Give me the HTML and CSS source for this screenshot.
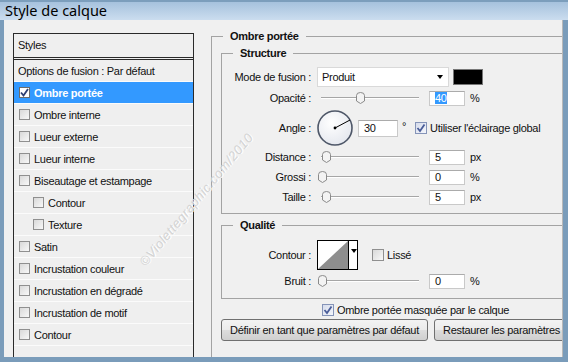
FILE: index.html
```html
<!DOCTYPE html>
<html lang="fr">
<head>
    <meta charset="UTF-8">
    <title>Style de calque</title>
    <link rel="stylesheet" href="styles.css">
</head>
<body>

<div class="window">
    <div class="titlebar">Style de calque</div>

    <div class="main">
        <div class="styles-panel">
            <div class="styles-head">Styles</div>
            <ul class="style-list">
                <li class="item">Options de fusion : Par défaut</li>
                <li class="item selected"><span class="cb on"><svg width="9" height="9" viewBox="0 0 9 9"><path d="M1 4.5 L3.5 7.5 L8 1" fill="none" stroke="#2f3f73" stroke-width="1.8"/></svg></span>Ombre portée</li>
                <li class="item"><span class="cb"></span>Ombre interne</li>
                <li class="item"><span class="cb"></span>Lueur externe</li>
                <li class="item"><span class="cb"></span>Lueur interne</li>
                <li class="item"><span class="cb"></span>Biseautage et estampage</li>
                <li class="item sub"><span class="cb"></span>Contour</li>
                <li class="item sub"><span class="cb"></span>Texture</li>
                <li class="item"><span class="cb"></span>Satin</li>
                <li class="item"><span class="cb"></span>Incrustation couleur</li>
                <li class="item"><span class="cb"></span>Incrustation en dégradé</li>
                <li class="item"><span class="cb"></span>Incrustation de motif</li>
                <li class="item"><span class="cb"></span>Contour</li>
            </ul>
        </div>

        <div class="settings">
            <fieldset class="group outer">
                <legend>Ombre portée</legend>

                <fieldset class="group structure">
                    <legend>Structure</legend>

                    <div class="row first">
                        <span class="lbl">Mode de fusion :</span>
                        <div class="select">Produit<span class="arrow"></span></div>
                        <span class="swatch"></span>
                    </div>

                    <div class="row">
                        <span class="lbl">Opacité :</span>
                        <div class="slider"><span class="track"></span><svg class="thumb" style="left:39px" width="9" height="12" viewBox="0 0 9 12"><path d="M0.5 3.5 Q0.5 0.5 4.5 0.5 Q8.5 0.5 8.5 3.5 L8.5 9 L4.5 11.5 L0.5 9 Z" fill="#f3f3f3" stroke="#8a8a8a"/></svg></div>
                        <span class="num"><span class="hl">40</span></span>
                        <span class="unit">%</span>
                    </div>

                    <div class="row angle">
                        <span class="lbl">Angle :</span>
                        <svg class="dial" width="38" height="38" viewBox="0 0 38 38">
                            <defs>
                                <radialGradient id="dialfill" cx="0.4" cy="0.35" r="0.7">
                                    <stop offset="0" stop-color="#ffffff"/>
                                    <stop offset="1" stop-color="#e4e7ee"/>
                                </radialGradient>
                            </defs>
                            <circle cx="18" cy="19" r="17" fill="url(#dialfill)" stroke="#4e5768" stroke-width="1.6"/>
                            <line x1="18" y1="19" x2="33" y2="11" stroke="#000" stroke-width="1"/>
                            <circle cx="18" cy="19" r="1.4" fill="#000"/>
                        </svg>
                        <span class="num wide">30</span>
                        <span class="deg">°</span>
                        <span class="cb on big"><svg width="10" height="10" viewBox="0 0 10 10"><path d="M1.5 5 L4 8 L8.5 1.5" fill="none" stroke="#4a5d99" stroke-width="1.8"/></svg></span>
                        <span class="cb-text">Utiliser l'éclairage global</span>
                    </div>

                    <div class="row tight">
                        <span class="lbl">Distance :</span>
                        <div class="slider"><span class="track"></span><svg class="thumb" style="left:5px" width="9" height="12" viewBox="0 0 9 12"><path d="M0.5 3.5 Q0.5 0.5 4.5 0.5 Q8.5 0.5 8.5 3.5 L8.5 9 L4.5 11.5 L0.5 9 Z" fill="#f3f3f3" stroke="#8a8a8a"/></svg></div>
                        <span class="num">5</span>
                        <span class="unit">px</span>
                    </div>

                    <div class="row tight">
                        <span class="lbl">Grossi :</span>
                        <div class="slider"><span class="track"></span><svg class="thumb" style="left:1px" width="9" height="12" viewBox="0 0 9 12"><path d="M0.5 3.5 Q0.5 0.5 4.5 0.5 Q8.5 0.5 8.5 3.5 L8.5 9 L4.5 11.5 L0.5 9 Z" fill="#f3f3f3" stroke="#8a8a8a"/></svg></div>
                        <span class="num">0</span>
                        <span class="unit">%</span>
                    </div>

                    <div class="row tight">
                        <span class="lbl">Taille :</span>
                        <div class="slider"><span class="track"></span><svg class="thumb" style="left:5px" width="9" height="12" viewBox="0 0 9 12"><path d="M0.5 3.5 Q0.5 0.5 4.5 0.5 Q8.5 0.5 8.5 3.5 L8.5 9 L4.5 11.5 L0.5 9 Z" fill="#f3f3f3" stroke="#8a8a8a"/></svg></div>
                        <span class="num">5</span>
                        <span class="unit">px</span>
                    </div>
                </fieldset>

                <fieldset class="group quality">
                    <legend>Qualité</legend>

                    <div class="row contour-row">
                        <span class="lbl">Contour :</span>
                        <div class="contour">
                            <svg class="preview" width="30" height="28" viewBox="0 0 30 28"><rect width="30" height="28" fill="#fff"/><path d="M0 28 L30 0 L30 28 Z" fill="#8e8e8e"/></svg>
                            <span class="dd"><span class="arrow small"></span></span>
                        </div>
                        <span class="cb lisse"></span>
                        <span class="cb-text">Lissé</span>
                    </div>

                    <div class="row">
                        <span class="lbl">Bruit :</span>
                        <div class="slider"><span class="track"></span><svg class="thumb" style="left:1px" width="9" height="12" viewBox="0 0 9 12"><path d="M0.5 3.5 Q0.5 0.5 4.5 0.5 Q8.5 0.5 8.5 3.5 L8.5 9 L4.5 11.5 L0.5 9 Z" fill="#f3f3f3" stroke="#8a8a8a"/></svg></div>
                        <span class="num">0</span>
                        <span class="unit">%</span>
                    </div>
                </fieldset>

                <div class="mask-row">
                    <span class="cb on big"><svg width="10" height="10" viewBox="0 0 10 10"><path d="M1.5 5 L4 8 L8.5 1.5" fill="none" stroke="#4a5d99" stroke-width="1.8"/></svg></span>
                    <span class="cb-text">Ombre portée masquée par le calque</span>
                </div>

                <div class="buttons">
                    <button class="btn first-btn">Définir en tant que paramètres par défaut</button>
                    <button class="btn">Restaurer les paramètres par défaut</button>
                </div>
            </fieldset>
        </div>
    </div>

    <div class="watermark">©Violettegraphic.com/2010</div>
</div>

</body>
</html>
```

FILE: styles.css
```css
body {
    margin: 0;
    font-family: "Liberation Sans", Arial, sans-serif;
    font-size: 11px;
    letter-spacing: -0.3px;
    color: #111;
}
.window {
    position: relative;
    width: 568px;
    height: 362px;
    display: flex;
    flex-direction: column;
    background: #7a9cba;
    overflow: hidden;
}
.titlebar {
    height: 20px;
    box-sizing: border-box;
    border-top: 2px solid #7c9ebc;
    background: linear-gradient(#a6c2dd, #cbddef);
    padding-left: 5px;
    font-family: "Noto Sans", sans-serif;
    font-size: 14.5px;
    letter-spacing: 0;
    line-height: 16px;
    color: #000;
}
.main {
    flex: 1;
    display: flex;
    margin: 0 5px 5px 4px;
    background: #f0f0f0;
    border-right: 1px solid #b8b8b8;
    overflow: hidden;
}

/* liste des styles */
.styles-panel {
    flex: none;
    width: 181px;
    box-sizing: border-box;
    margin: 13px 0 0 9px;
    border: 1px solid #2a2a2a;
    border-bottom: none;
    background: #efefef;
}
.styles-head {
    height: 23px;
    line-height: 23px;
    padding-left: 4px;
    border-bottom: 3px double #2a2a2a;
}
.style-list {
    list-style: none;
    margin: 0;
    padding: 0;
}
.item {
    display: flex;
    align-items: center;
    height: 21px;
    padding-left: 4px;
    border-bottom: 1px solid #fbfbfb;
    white-space: nowrap;
}
.item .cb {
    margin: 0 4px 0 1px;
}
.item.sub {
    padding-left: 18px;
}
.item.selected {
    background: #3399ff;
    color: #fff;
    font-weight: bold;
}
.item.selected .cb {
    background: #fff;
    border-color: #6c6c6c;
}

.cb {
    display: inline-flex;
    align-items: center;
    justify-content: center;
    flex: none;
    width: 11px;
    height: 11px;
    box-sizing: border-box;
    border: 1px solid #8f8f8f;
    background: linear-gradient(135deg, #d9d9d9, #f8f8f8);
}
.cb.big {
    width: 12px;
    height: 12px;
    border-color: #8594b8;
    background: linear-gradient(135deg, #d6dcec, #f4f6fb);
}
.cb-text {
    margin-left: 3px;
    white-space: nowrap;
}

/* réglages */
.settings {
    flex: none;
    width: 420px;
    margin: 10px 0 0 17px;
}
.group {
    margin: 0;
    border: 1px solid #a3a3a3;
    min-width: 0;
}
.group legend {
    font-weight: bold;
    line-height: 13px;
    margin-left: 11px;
    padding: 0 7px;
}
.outer {
    padding: 4px 0 40px 9px;
}
.outer > legend {
    margin-left: 2px;
}
.structure {
    padding: 0 0 6px 0;
}
.quality {
    margin-top: 5px;
    padding: 0 0 7px 0;
}
.row {
    display: flex;
    align-items: center;
    height: 20px;
    margin-top: 1px;
    white-space: nowrap;
}
.row.first {
    margin-top: 7px;
}
.row.angle {
    height: 38px;
}
.row.tight {
    margin-top: 0;
}
.row.contour-row {
    height: 30px;
    margin-top: 8px;
}
.lbl {
    flex: none;
    width: 89px;
    margin-right: 6px;
    text-align: right;
}
.select {
    display: flex;
    align-items: center;
    width: 132px;
    height: 20px;
    box-sizing: border-box;
    padding-left: 4px;
    border: 1px solid #d9d9d9;
    background: #fff;
}
.arrow {
    margin-left: auto;
    margin-right: 5px;
    border-left: 3.5px solid transparent;
    border-right: 3.5px solid transparent;
    border-top: 4px solid #000;
}
.arrow.small {
    margin: 8px 0 0 2px;
    border-left-width: 3px;
    border-right-width: 3px;
}
.swatch {
    width: 30px;
    height: 16px;
    box-sizing: border-box;
    margin-left: 4px;
    border: 1px solid #777;
    background: #000;
}
.slider {
    position: relative;
    flex: none;
    width: 104px;
    height: 20px;
}
.track {
    position: absolute;
    left: 4px;
    right: 2px;
    top: 9px;
    height: 1px;
    background: #a6a6a6;
    border-bottom: 1px solid #fff;
}
.thumb {
    position: absolute;
    top: 4px;
}
.num {
    flex: none;
    width: 36px;
    height: 15px;
    box-sizing: border-box;
    margin-left: 8px;
    padding-left: 5px;
    border: 1px solid #c9c9c9;
    border-top-color: #ababab;
    background: #fff;
    line-height: 13px;
}
.num.wide {
    width: 40px;
    height: 17px;
    margin-left: 3px;
    padding-left: 5px;
    line-height: 15px;
}
.hl {
    background: #3399ff;
    color: #fff;
}
.unit {
    margin-left: 5px;
}
.deg {
    margin-left: 4px;
    margin-right: 9px;
    align-self: flex-start;
    margin-top: 11px;
}
.dial {
    flex: none;
}
.contour {
    display: flex;
    width: 41px;
    height: 30px;
    box-sizing: border-box;
    border: 1px solid #000;
    background: #fff;
}
.preview {
    border-right: 1px solid #000;
}
.dd {
    flex: 1;
    display: flex;
    align-items: flex-start;
}
.cb.lisse {
    width: 12px;
    height: 12px;
    margin-left: 14px;
}
.mask-row {
    display: flex;
    align-items: center;
    height: 14px;
    margin-top: 4px;
    padding-left: 101px;
}
.buttons {
    display: flex;
    gap: 6px;
    margin-top: 2px;
}
.btn {
    flex: none;
    height: 22px;
    padding: 0 8px;
    border: 1px solid #707070;
    border-radius: 3px;
    background: linear-gradient(#f3f3f3 0%, #ebebeb 50%, #dddddd 51%, #cfcfcf 100%);
    font-family: "Liberation Sans", Arial, sans-serif;
    font-size: 11px;
    letter-spacing: -0.3px;
    color: #111;
    white-space: nowrap;
}
.first-btn {
    width: 207px;
}

.watermark {
    position: absolute;
    left: 112px;
    top: 192px;
    transform: rotate(-50deg);
    font-size: 13px;
    font-style: italic;
    letter-spacing: 0.5px;
    color: #d4d4d4;
    text-shadow: 1px 1px 0 #fff;
    white-space: nowrap;
}
```
